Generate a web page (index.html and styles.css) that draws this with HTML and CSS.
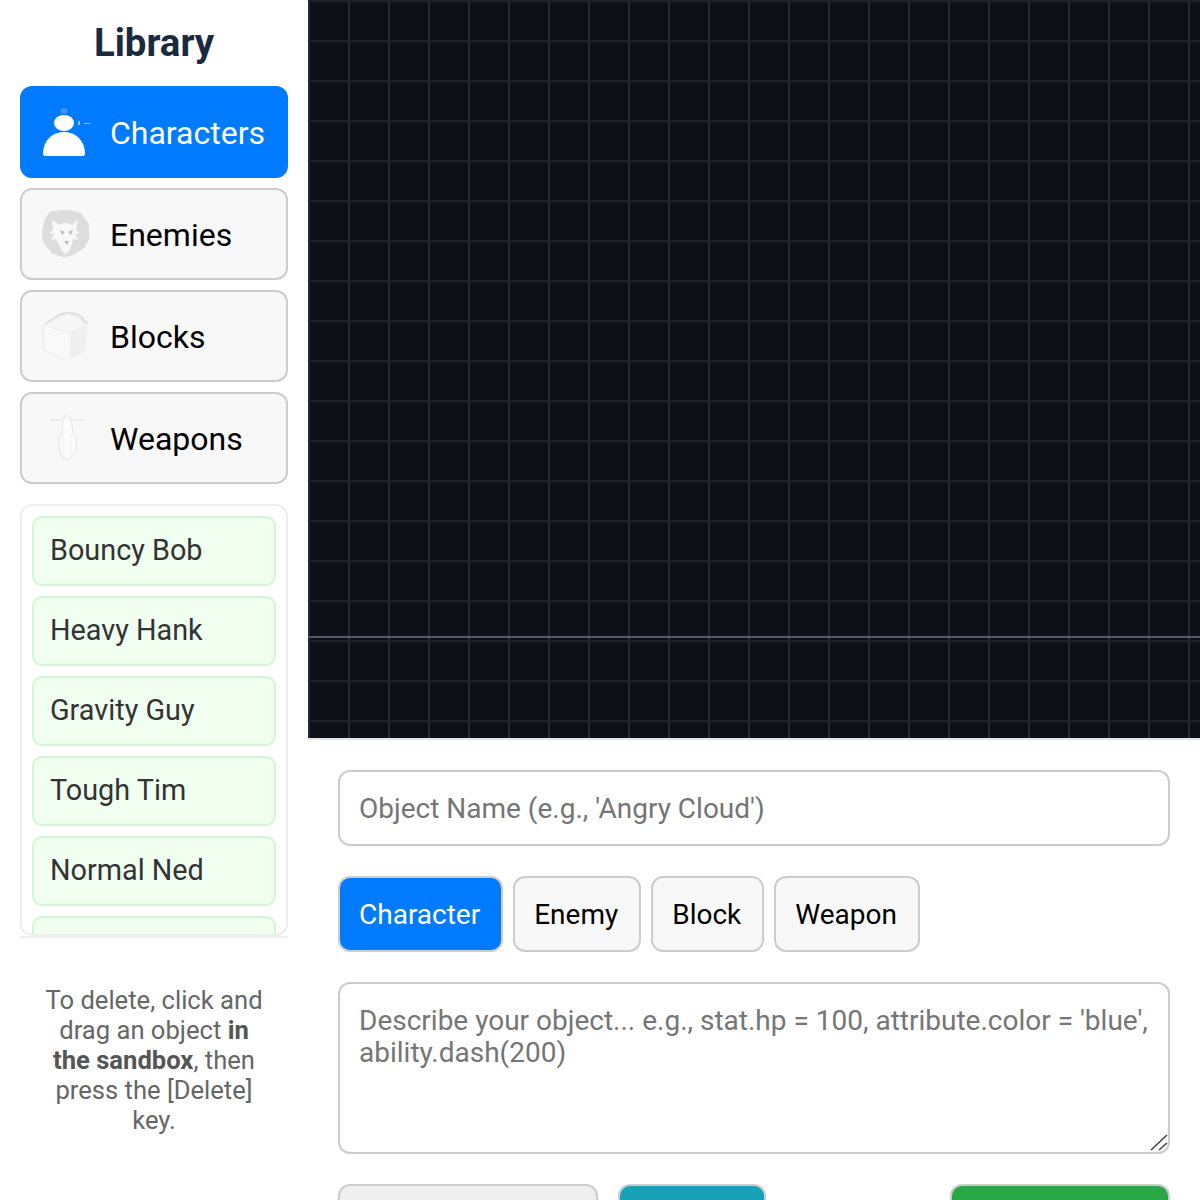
FILE: index.html
```html
<!DOCTYPE html>
<html lang="en">
<head>
<meta charset="utf-8">
<title>Sandbox</title>
<link rel="stylesheet" href="styles.css">
</head>
<body>
<div class="app">
  <aside class="sidebar">
    <h1 class="title">Library</h1>
    <nav class="tabs">
      <button class="tab tab-active">
        <svg class="tab-icon" viewBox="0 0 48 48">
          <ellipse cx="22" cy="3" rx="3.5" ry="3" fill="#4d9bec" opacity=".8"/>
          <ellipse cx="22" cy="15" rx="10" ry="8" fill="#fff"/>
          <path d="M1 46c0-13 9-22 21-22s21 9 21 22c0 1-1 2-2 2H3c-1 0-2-1-2-2z" fill="#fff"/>
          <path d="M36 13h2v4h-2zM42 15h6v1h-6z" fill="#8fc2f5"/>
        </svg>
        <span>Characters</span>
      </button>
      <button class="tab">
        <svg class="tab-icon" viewBox="0 0 48 48">
          <path d="M8 2L25 0l13 3 8 10 1 15-5 10-12 7-8 2-12-4-8-10-2-9 3-14z" fill="#dddddd" stroke="#dddddd" stroke-linejoin="round" stroke-width="1"/>
          <path d="M10 10l8 5 4-2h4l4 2 6-6-2 11 4 3-5 1 3 6-5-1-2 8-3 5-3 2-3-3-3-6-3-6-5 1 3-6-5-1 4-3z" fill="#f8f8f8"/>
          <path d="M18 20l5 2-3 3zM31 20l-5 2 3 3zM22 31h5l-2 4z" fill="#bdbdbd"/>
        </svg>
        <span>Enemies</span>
      </button>
      <button class="tab">
        <svg class="tab-icon" viewBox="0 0 48 48">
          <path d="M2 12L17 3l10-3 10 3 9 8-1 6-2 22-10 6-9 2-12-3-11-6-1-20z" fill="#efefef"/>
          <path d="M3 13L18 5l8-2 9 3 8 8-15 6z" fill="#f7f7f7"/>
          <path d="M2 14l25 7 2 1-2 24-11-2-12-5-2-6z" fill="#f9f9f9"/>
          <path d="M3 12L17 3l10-3 10 3 9 9" fill="none" stroke="#e0e0e0" stroke-width="2"/>
        </svg>
        <span>Blocks</span>
      </button>
      <button class="tab">
        <svg class="tab-icon" viewBox="0 0 48 48">
          <path d="M8 6h35" stroke="#dedede" stroke-width="1"/>
          <path d="M25 1l4 4 2 15 3 4v12l-6 9-3 1-5-4-3-6V24l3-4 1-15z" fill="#fcfcfc" stroke="#e8e8e8" stroke-width="1.2"/>
          <path d="M21 20v20M29 20v20" stroke="#f0f0f0" stroke-width="1"/>
        </svg>
        <span>Weapons</span>
      </button>
    </nav>
    <ul class="items">
      <li class="item">Bouncy Bob</li>
      <li class="item">Heavy Hank</li>
      <li class="item">Gravity Guy</li>
      <li class="item">Tough Tim</li>
      <li class="item">Normal Ned</li>
      <li class="item">Speedy Sam</li>
    </ul>
    <p class="hint">To delete, click and drag an object <strong>in the sandbox</strong>, then press the [Delete] key.</p>
  </aside>
  <main class="workspace">
    <div class="canvas"><div class="ground"></div></div>
    <form class="form">
      <input class="field" type="text" placeholder="Object Name (e.g., 'Angry Cloud')">
      <div class="types">
        <button type="button" class="type type-active">Character</button>
        <button type="button" class="type">Enemy</button>
        <button type="button" class="type">Block</button>
        <button type="button" class="type">Weapon</button>
      </div>
      <div class="area-wrap">
        <textarea class="field area" placeholder="Describe your object... e.g., stat.hp = 100, attribute.color = 'blue', ability.dash(200)"></textarea>
        <svg class="grip" viewBox="0 0 20 20"><path d="M2 18L18 3M10 18l8-7" fill="none" stroke="#444" stroke-width="1.6"/></svg>
      </div>
      <div class="actions">
        <div class="actions-left">
          <button type="button" class="action action-grey"></button>
          <button type="button" class="action action-teal"></button>
        </div>
        <button type="button" class="action action-green"></button>
      </div>
    </form>
  </main>
</div>
</body>
</html>
```
FILE: styles.css
```css
* { box-sizing: border-box; }
html, body { margin: 0; height: 1200px; overflow: hidden; background: #fff; }
body { font-family: Roboto, "Liberation Sans", sans-serif; }
button, input, textarea { font-family: inherit; }

.app { display: flex; height: 1200px; }

.sidebar { width: 308px; flex: none; padding: 20px 20px 0; display: flex; flex-direction: column; }
.title { margin: 0 0 20px; height: 46px; font-size: 38.4px; line-height: 46px; font-weight: 700; text-align: center; color: #1a2a40; }

.tabs { display: flex; flex-direction: column; gap: 10px; }
.tab { height: 92px; display: flex; align-items: center; gap: 20px; padding: 0 20px; border: 2px solid #ccc; border-radius: 12px; background: #f8f8f8; color: #000; font-size: 32px; text-align: left; }
.tab span { padding-top: 2px; }
.tab-active { background: #007bff; border-color: #007bff; color: #fff; }
.tab-icon { width: 48px; height: 48px; flex: none; display: block; filter: blur(.5px); }

.items { list-style: none; margin: 20px 0 0; padding: 10px; height: 432px; overflow: hidden; border: 2px solid #eee; border-radius: 12px; display: flex; flex-direction: column; gap: 10px; flex: none; }
.item { height: 70px; flex: none; padding: 0 16px 2px; display: flex; align-items: center; background: #f0fff0; border: 2px solid #d4f5d4; border-radius: 10px; color: #333; font-size: 28.8px; }

.hint { margin: 0; padding: 47px 20px 0; border-top: 2px solid #eee; font-size: 25.6px; line-height: 30px; color: #666; text-align: center; }
.hint strong { color: #555; }

.workspace { flex: 1; min-width: 0; display: flex; flex-direction: column; }
.canvas { position: relative; height: 740px; flex: none; border-bottom: 2px solid #e5e5e5; background-color: #0d1117; background-image: linear-gradient(#1e2129 2px, transparent 2px), linear-gradient(90deg, #272a33 2px, transparent 2px); background-size: 40px 40px; }
.ground { position: absolute; left: 0; right: 0; top: 636px; height: 2px; background: #565868; }

.form { padding: 30px; display: flex; flex-direction: column; gap: 30px; }
.field { display: block; width: 100%; height: 76px; padding: 0 20px 0 19px; border: 2px solid #ccc; border-radius: 12px; background: #fff; color: #222; font-size: 28px; }
.field::placeholder { color: #757575; opacity: 1; }
.area-wrap { position: relative; }
.area { height: 172px; padding: 21px 16px 20px 19px; line-height: 32px; resize: none; }
.grip { position: absolute; right: 1px; bottom: 2px; width: 20px; height: 20px; pointer-events: none; }

.types { display: flex; gap: 10px; }
.type { height: 76px; padding: 0 21px 0 19px; border: 2px solid #ccc; border-radius: 12px; background: #f8f8f8; color: #000; font-size: 28px; }
.type-active { background: #007bff; border-color: #ccc; color: #fff; }

.actions { display: flex; justify-content: space-between; }
.actions-left { display: flex; gap: 20px; }
.action { height: 76px; border: 2px solid #ccc; border-radius: 12px; }
.action-grey { width: 260px; background: #efefef; }
.action-teal { width: 148px; background: #17a2b8; }
.action-green { width: 220px; background: #28a745; }
```
